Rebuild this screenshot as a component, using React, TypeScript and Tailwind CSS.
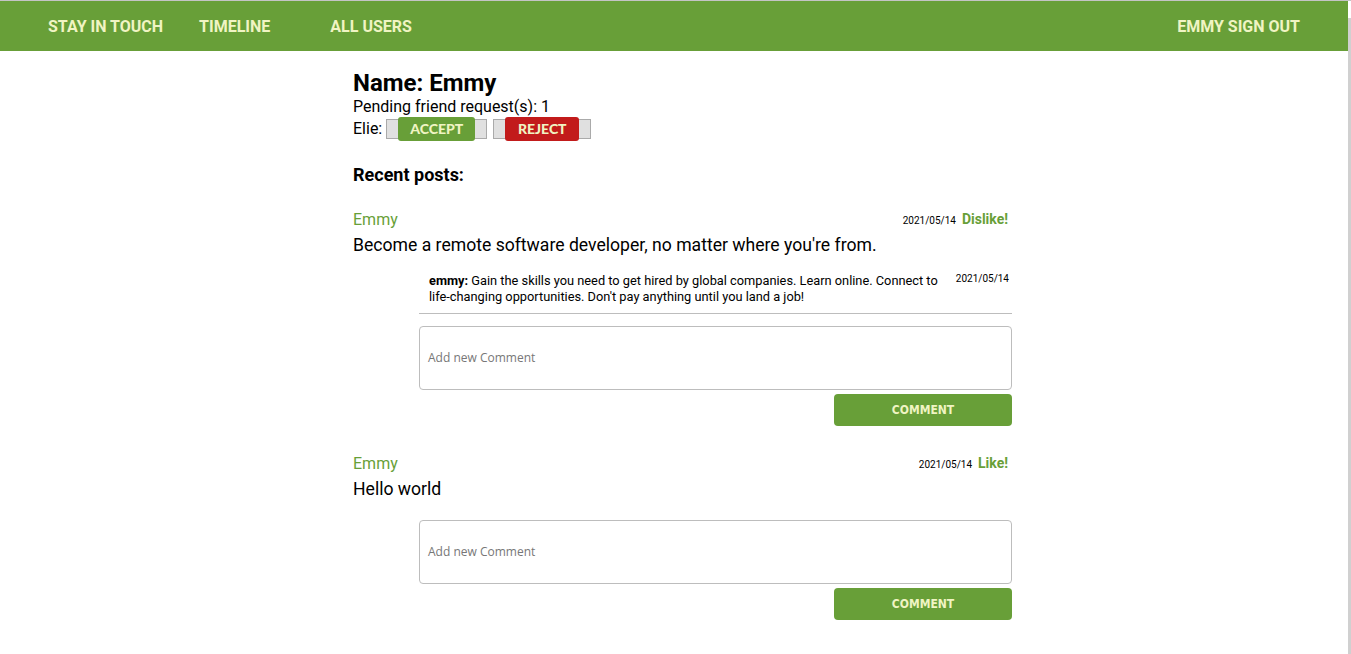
import React from "react";

const green = "bg-[#689f38]";

function Post({ text, action, comments }: { text: string; action: string; comments?: { user: string; text: string; date: string }[] }) {
  const hasComments = !!comments && comments.length > 0;
  return (
    <div className="flex flex-col">
      <div className="flex items-end justify-between">
        <span className="text-[16px] leading-[20px] text-[#689f38]">Emmy</span>
        <div className="flex items-baseline gap-[6px] pr-[4px]">
          <span className="text-[10px] text-black">2021/05/14</span>
          <span className="text-[14px] font-bold text-[#689f38]">{action}</span>
        </div>
      </div>
      <div className="mt-[3px] text-[17.6px] leading-[24px] text-black">{text}</div>
      <div className={`ml-[66px] flex flex-col ${hasComments ? "mt-[16px]" : "mt-[19px]"}`}>
        {comments && comments.map((c, i) => (
          <div key={i} className="mb-[12px] flex justify-between border-b border-[#bdbdbd] pb-[8px] pl-[10px] pr-[3px]">
            <p className="w-[520px] text-[12.8px] leading-[16px] text-black">
              <b>{c.user}:</b> {c.text}
            </p>
            <span className="text-[10px] leading-[12px] text-black">{c.date}</span>
          </div>
        ))}
        <textarea
          placeholder="Add new Comment"
          className="h-[64px] w-full resize-none rounded-[4px] border border-[#bdbdbd] px-[8px] pt-[23px] text-[12px] leading-[16px] placeholder:text-[#777] outline-none"
          style={{ fontFamily: '"Open Sans", sans-serif' }}
        />
        <div className="mt-[4px] flex justify-end">
          <button
            className={`h-[32px] w-[178px] rounded-[4px] ${green} text-[12px] font-bold text-[#f0f4c3]`}
            style={{ fontFamily: '"DejaVu Sans Condensed", "DejaVu Sans", sans-serif' }}
          >
            COMMENT
          </button>
        </div>
      </div>
    </div>
  );
}

export default function App() {
  return (
    <div className="flex min-h-[654px] border-t border-[#c4c4c4] bg-white" style={{ fontFamily: "Roboto, sans-serif" }}>
      <div className="flex-1">
        <nav className={`flex h-[50px] items-center ${green} px-[48px] pt-[2px] text-[16px] font-bold text-[#f0f4c3]`}>
          <span>STAY IN TOUCH</span>
          <span className="ml-[36px]">TIMELINE</span>
          <span className="ml-[60px]">ALL USERS</span>
          <span className="ml-auto">EMMY SIGN OUT</span>
        </nav>
        <main className="ml-[353px] w-[659px] pb-[30px]">
          <h1 className="mt-[17px] text-[24px] font-bold leading-[30px] text-black">Name: Emmy</h1>
          <div className="-mt-[1px] text-[16px] leading-[20px] text-black">Pending friend request(s): 1</div>
          <div className="flex items-center text-[16px] leading-[24px] text-black">
            <span>Elie:</span>
            <button className="ml-[4px] flex h-[20px] w-[101px] items-center border border-[#aaa] bg-[#e0e0e0] pl-[11px]">
              <span className={`flex h-[24px] w-[77px] items-center justify-center rounded-[3px] ${green} text-[14px] font-black text-[#f0f4c3]`} style={{ fontFamily: "Lato, sans-serif" }}>
                ACCEPT
              </span>
            </button>
            <button className="ml-[6px] flex h-[20px] w-[98px] items-center border border-[#aaa] bg-[#e0e0e0] pl-[11px]">
              <span className="flex h-[24px] w-[74px] items-center justify-center rounded-[3px] bg-[#c21b1b] text-[14px] font-black text-[#f0f4c3]" style={{ fontFamily: "Lato, sans-serif" }}>
                REJECT
              </span>
            </button>
          </div>
          <h2 className="mt-[22px] text-[18px] font-bold leading-[24px] text-black">Recent posts:</h2>
          <div className="mt-[22px] flex flex-col gap-[27px]">
            <Post
              text="Become a remote software developer, no matter where you're from."
              action="Dislike!"
              comments={[
                {
                  user: "emmy",
                  text: "Gain the skills you need to get hired by global companies. Learn online. Connect to life-changing opportunities. Don't pay anything until you land a job!",
                  date: "2021/05/14",
                },
              ]}
            />
            <Post text="Hello world" action="Like!" />
          </div>
        </main>
      </div>
      <div className="mt-[17px] w-[3px] bg-[#d0d0d0]" />
    </div>
  );
}
